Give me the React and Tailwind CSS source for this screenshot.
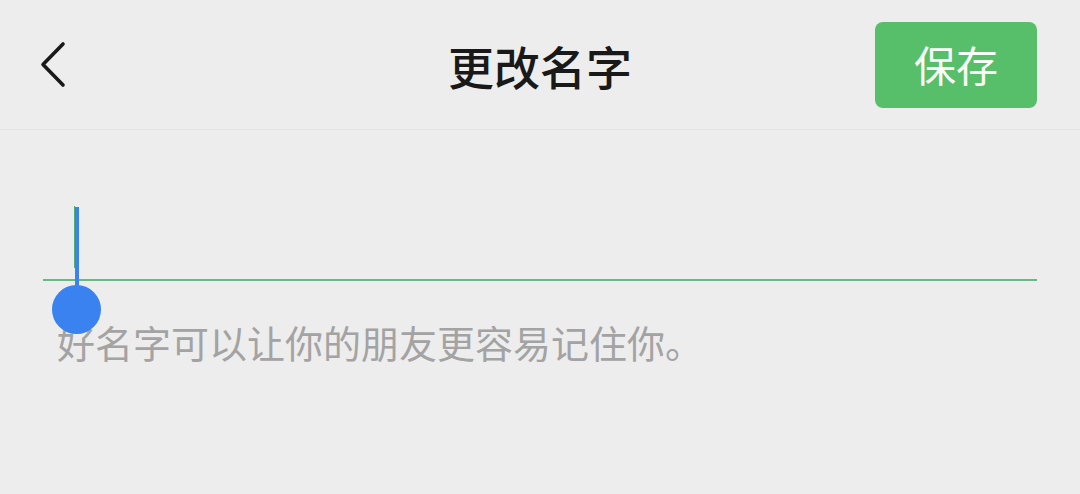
export default function App() {
  return (
    <div
      className="w-[1080px] h-[494px] bg-[#ededed] overflow-hidden"
      style={{ fontFamily: '"Noto Sans CJK SC", "Noto Sans", sans-serif' }}
    >
      {/* Header */}
      <div className="h-[130px] grid grid-cols-[1fr_auto_1fr] items-center px-[40px] border-b border-[#e4e4e4]">
        <div className="flex items-center">
          <svg width="28" height="48" viewBox="0 0 28 48" className="text-[#191919]">
            <path d="M23 3 L3 23.5 L23 44" fill="none" stroke="currentColor" strokeWidth="3.6" strokeLinecap="round" strokeLinejoin="round" />
          </svg>
        </div>
        <h1 className="text-[46px] leading-none font-medium text-[#191919]">更改名字</h1>
        <div className="flex justify-end pr-[3px]">
          <button className="w-[162px] h-[86px] rounded-[8px] bg-[#57be6a] text-[#f7fff8] text-[42px] leading-none flex items-center justify-center pb-[2px]">
            保存
          </button>
        </div>
      </div>

      {/* Body */}
      <div className="px-[43px]">
        <div className="relative h-[151px]">
          <div className="absolute left-0 right-0 bottom-0 h-[2px] bg-[#6ab787]" />
          {/* caret with selection handle */}
          <div className="absolute left-[31px] top-[76px] w-[1px] h-[62px] bg-[#4caf6e]" />
          <div className="absolute left-[32px] top-[77px] w-[4px] h-[100px] bg-[#3a82f0]" />
          <div className="absolute left-[9px] top-[155px] w-[49px] h-[49px] rounded-full bg-[#3a82f0]" />
        </div>
        <p className="mt-[42px] pl-[14px] text-[38px] leading-none text-[#a3a3a3]">
          好名字可以让你的朋友更容易记住你。
        </p>
      </div>
    </div>
  );
}
